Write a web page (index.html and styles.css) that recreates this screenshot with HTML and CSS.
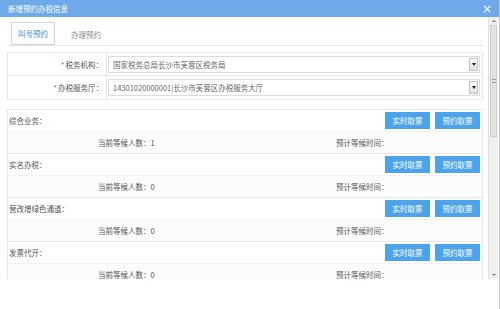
FILE: index.html
```html
<!DOCTYPE html>
<html lang="zh-CN">
<head>
<meta charset="utf-8">
<title>新增预约办税信息</title>
<link rel="stylesheet" href="styles.css">
</head>
<body>
<div class="dialog">
  <div class="titlebar">
    <span class="title">新增预约办税信息</span>
    <span class="close">×</span>
  </div>
  <div class="main">
    <div class="content">
      <div class="tabs">
        <div class="tab active">叫号预约</div>
        <div class="tab">办理预约</div>
      </div>
      <div class="form">
        <div class="frow">
          <div class="flabel"><span class="req">*</span> 税务机构：</div>
          <div class="fcell">
            <div class="select"><span class="sval">国家税务总局长沙市芙蓉区税务局</span><span class="sarrow"></span></div>
          </div>
        </div>
        <div class="frow">
          <div class="flabel"><span class="req">*</span> 办税服务厅：</div>
          <div class="fcell">
            <div class="select"><span class="sval">14301020000001|长沙市芙蓉区办税服务大厅</span><span class="sarrow"></span></div>
          </div>
        </div>
      </div>
      <div class="queue">
        <div class="item">
          <div class="ihead"><span class="iname">综合业务：</span><div class="btns"><button class="btn">实时取票</button><button class="btn">预约取票</button></div></div>
          <div class="isub"><span>当前等候人数：1</span><span>预计等候时间：</span></div>
        </div>
        <div class="item">
          <div class="ihead"><span class="iname">实名办税：</span><div class="btns"><button class="btn">实时取票</button><button class="btn">预约取票</button></div></div>
          <div class="isub"><span>当前等候人数：0</span><span>预计等候时间：</span></div>
        </div>
        <div class="item">
          <div class="ihead"><span class="iname">营改增绿色通道：</span><div class="btns"><button class="btn">实时取票</button><button class="btn">预约取票</button></div></div>
          <div class="isub"><span>当前等候人数：0</span><span>预计等候时间：</span></div>
        </div>
        <div class="item">
          <div class="ihead"><span class="iname">发票代开：</span><div class="btns"><button class="btn">实时取票</button><button class="btn">预约取票</button></div></div>
          <div class="isub"><span>当前等候人数：0</span><span>预计等候时间：</span></div>
        </div>
      </div>
    </div>
    <div class="scrollbar">
      <div class="sb-up"></div>
      <div class="sb-thumb"><span class="grip"></span></div>
      <div class="sb-track"></div>
      <div class="sb-down"></div>
    </div>
  </div>
</div>
</body>
</html>
```

FILE: styles.css
```css
html, body {
  margin: 0;
  padding: 0;
  background: #fff;
}
body {
  font-family: "Noto Sans CJK SC", "DejaVu Sans", sans-serif;
  font-size: 7.5px;
  color: #555;
}
.dialog {
  width: 500px;
  height: 309px;
  box-sizing: border-box;
  border-right: 1px solid #c4c4c4;
  display: flex;
  flex-direction: column;
  overflow: hidden;
}
.titlebar {
  height: 17px;
  flex: none;
  background: #6eaaea;
  color: #fff;
  display: flex;
  align-items: center;
  justify-content: space-between;
  padding: 0 8px;
  box-sizing: border-box;
}
.title {
  font-size: 7.5px;
}
.close {
  font-family: "DejaVu Sans", sans-serif;
  font-size: 12px;
  line-height: 12px;
  margin-right: -1px;
}
.main {
  display: flex;
  height: 262px;
  flex: none;
}
.content {
  flex: 1;
  overflow: hidden;
  padding: 5px 5px 0 7px;
}
.tabs {
  display: flex;
  height: 23px;
  padding-left: 4px;
  border-bottom: 1px solid #e6e6e6;
}
.tab {
  height: 23px;
  box-sizing: border-box;
  padding: 0 6px;
  display: flex;
  align-items: center;
  color: #888;
  border: 1px solid transparent;
  border-bottom: none;
}
.tab + .tab {
  margin-left: 9px;
}
.tab.active {
  border: 1px solid #cdd6e2;
  color: #4a8bd0;
  background: #fff;
  box-shadow: 0 0 1px rgba(0, 0, 0, 0.08);
}
.form {
  margin-top: 6px;
  border: 1px solid #e8e8e8;
}
.frow {
  display: flex;
  height: 22px;
}
.frow + .frow {
  border-top: 1px solid #e8e8e8;
  height: 23px;
}
.flabel {
  width: 99px;
  box-sizing: border-box;
  border-right: 1px solid #e8e8e8;
  text-align: right;
  padding-right: 3px;
  display: flex;
  align-items: center;
  justify-content: flex-end;
  color: #555;
}
.req {
  color: #e23b3b;
  margin-right: 1px;
}
.fcell {
  flex: 1;
  display: flex;
  align-items: center;
  padding: 0 2px 0 1px;
}
.select {
  flex: 1;
  height: 17px;
  box-sizing: border-box;
  border: 1px solid #dcdcdc;
  display: flex;
  align-items: center;
  padding-left: 4px;
  color: #666;
}
.sarrow {
  margin-left: auto;
  margin-right: 1px;
  width: 9px;
  height: 13px;
  box-sizing: border-box;
  border: 1px solid #c3c3c3;
  background: linear-gradient(#fbfbfb, #e0e0e0);
  display: flex;
  align-items: center;
  justify-content: center;
}
.sarrow::after {
  content: "";
  width: 0;
  height: 0;
  border-top: 3px solid #222;
  border-left: 2px solid transparent;
  border-right: 2px solid transparent;
}
.queue {
  margin-top: 9px;
  border: 1px solid #e8e8e8;
  border-bottom: none;
}
.ihead {
  height: 21px;
  display: flex;
  align-items: center;
  justify-content: space-between;
  padding: 0 2px 0 1px;
}
.btns {
  display: flex;
  gap: 5px;
}
.btn {
  width: 45px;
  height: 17px;
  padding: 0;
  border: none;
  background: #4ca3ea;
  color: #fff;
  font-family: "Noto Sans CJK SC", sans-serif;
  font-size: 7.5px;
}
.isub {
  height: 21px;
  border-top: 1px solid #f1f1f1;
  border-bottom: 1px solid #e8e8e8;
  background: #fcfcfc;
  display: grid;
  grid-template-columns: 238px 1fr;
  align-items: center;
  padding-left: 90px;
}
.scrollbar {
  width: 10px;
  margin-right: 1px;
  display: flex;
  flex-direction: column;
  background: #f0f0f0;
  border-left: 1px solid #e2e2e2;
  box-sizing: border-box;
}
.sb-up, .sb-down {
  height: 8px;
  display: flex;
  align-items: center;
  justify-content: center;
}
.sb-up::after {
  content: "";
  border-bottom: 2px solid #777;
  border-left: 2px solid transparent;
  border-right: 2px solid transparent;
}
.sb-down::after {
  content: "";
  border-top: 2px solid #777;
  border-left: 2px solid transparent;
  border-right: 2px solid transparent;
}
.sb-thumb {
  height: 112px;
  margin: 0 1px;
  background: #e2e2e2;
  border: 1px solid #cfcfcf;
  box-sizing: border-box;
  display: flex;
  align-items: center;
  justify-content: center;
}
.grip {
  width: 4px;
  height: 4px;
  border-top: 1px solid #999;
  border-bottom: 1px solid #999;
  box-sizing: border-box;
}
.sb-track {
  flex: 1;
}
```
